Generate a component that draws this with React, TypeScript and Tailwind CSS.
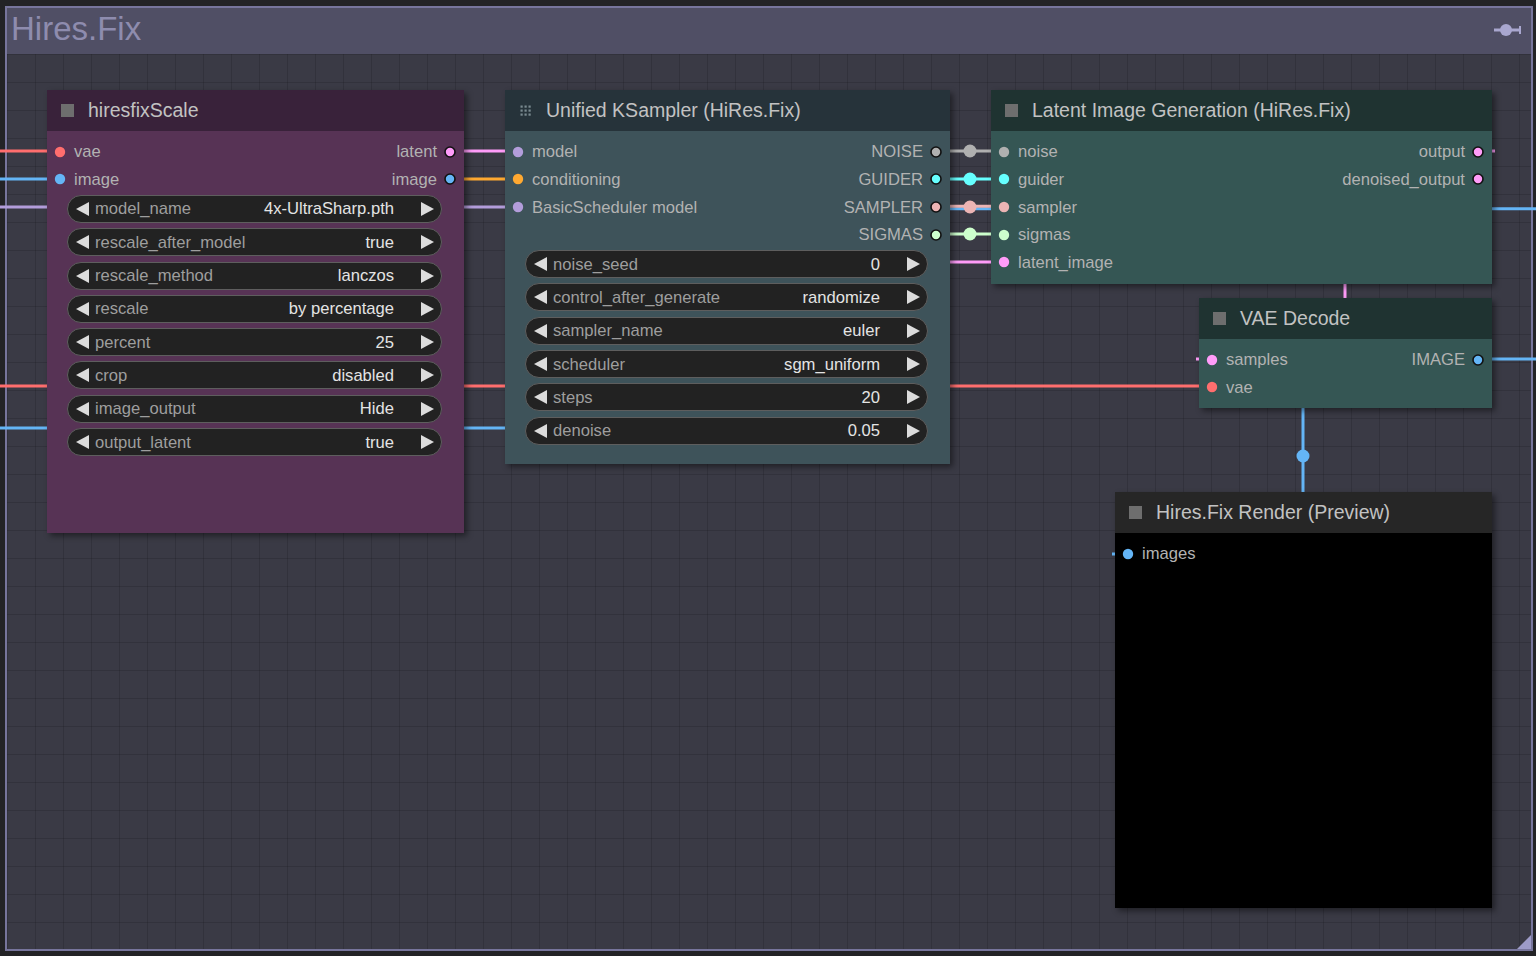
import React from 'react';

type Slot = { label: string; color: string };
type Widget = { label: string; value: string };

const C = {
  red: '#ff6e6e',
  blue: '#64b5f6',
  lav: '#b39ddb',
  pink: '#ff9cf9',
  orange: '#ffa931',
  gray: '#b0b0b0',
  cyan: '#66ffff',
  salmon: '#ecb4b4',
  green: '#cdffcd',
};

function Arrow({ right = false }: { right?: boolean }) {
  return (
    <svg width="13" height="14" viewBox="0 0 13 14" className="shrink-0">
      {right
        ? <polygon points="0,0 13,7 0,14" fill="#dcdcdc" />
        : <polygon points="13,0 0,7 13,14" fill="#dcdcdc" />}
    </svg>
  );
}

function WidgetRow({ label, value }: Widget) {
  return (
    <div className="h-[33.33px] flex items-center pl-[20px] pr-[22px]">
      <div className="flex-1 h-[28px] rounded-full bg-[#222222] border border-[#5e5e5e] flex items-center pl-[8px] pr-[7px]">
        <Arrow />
        <span className="ml-[6px] pt-[2px] text-[#9e9e9e]">{label}</span>
        <span className="ml-auto pt-[2px] text-[#e4e4e4]">{value}</span>
        <span className="ml-[27px] flex"><Arrow right /></span>
      </div>
    </div>
  );
}

function Dot({ color, outlined = false }: { color: string; outlined?: boolean }) {
  return (
    <svg width="12" height="12" viewBox="0 0 12 12" className="shrink-0">
      <circle cx="6" cy="6" r={outlined ? 5 : 5.2} fill={color} stroke={outlined ? '#111' : 'none'} strokeWidth={outlined ? 1.6 : 0} />
    </svg>
  );
}

function SquareIcon() {
  return <span className="w-[13px] h-[13px] bg-[#6e6e6e] shrink-0" />;
}

function DotsIcon() {
  return (
    <svg width="13" height="13" viewBox="0 0 13 13" className="shrink-0">
      {[1.5, 5.5, 9.5].map(y =>
        [1.5, 5.5, 9.5].map(x => <rect key={`${x}-${y}`} x={x} y={y} width="2.2" height="2.2" fill="#7a8a90" />)
      )}
    </svg>
  );
}

function Node({
  className, titleBg, bodyBg, title, icon = 'square', inputs = [], outputs = [], widgets = [],
}: {
  className: string;
  titleBg: string;
  bodyBg: string;
  title: string;
  icon?: 'square' | 'dots';
  inputs?: Slot[];
  outputs?: Slot[];
  widgets?: Widget[];
}) {
  const rows = Math.max(inputs.length, outputs.length);
  return (
    <div className={`absolute flex flex-col shadow-[3px_3px_6px_rgba(0,0,0,0.45)] ${className}`}>
      <div className={`h-[41px] shrink-0 flex items-center pl-[14px] gap-[14px] ${titleBg}`}>
        {icon === 'dots' ? <DotsIcon /> : <SquareIcon />}
        <span className="text-[19.5px] text-[#c2c2c2] leading-none">{title}</span>
      </div>
      <div className={`flex-1 pt-[7px] ${bodyBg}`}>
        {Array.from({ length: rows }).map((_, i) => (
          <div key={i} className="h-[27.6px] flex items-center justify-between">
            {inputs[i] ? (
              <div className="flex items-center pl-[7px] gap-[8px]">
                <Dot color={inputs[i].color} />
                <span className="pt-[2px] text-[#b2b2b2]">{inputs[i].label}</span>
              </div>
            ) : <span />}
            {outputs[i] ? (
              <div className="flex items-center pr-[8px] gap-[7px]">
                <span className="pt-[2px] text-[#b2b2b2]">{outputs[i].label}</span>
                <Dot color={outputs[i].color} outlined />
              </div>
            ) : <span />}
          </div>
        ))}
        <div className="-mt-[1px]">
          {widgets.map(w => <WidgetRow key={w.label} {...w} />)}
        </div>
      </div>
    </div>
  );
}

function Links() {
  const lines: [number, number, number, number, string][] = [
    [0, 151, 60, 151, C.red],
    [0, 179, 60, 179, C.blue],
    [0, 207, 60, 207, C.lav],
    [0, 386, 1212, 386, C.red],
    [0, 428, 518, 428, C.blue],
    [450, 151, 518, 151, C.pink],
    [450, 179, 518, 179, C.orange],
    [450, 207, 518, 207, C.lav],
    [936, 151, 1004, 151, C.gray],
    [936, 179, 1004, 179, C.cyan],
    [936, 208.8, 1536, 208.8, C.blue],
    [936, 206.2, 1004, 206.2, C.salmon],
    [936, 234, 1004, 234, C.green],
    [940, 262, 1004, 262, C.pink],
    [1345, 280, 1345, 300, C.pink],
    [1477, 359, 1536, 359, C.blue],
    [1303, 400, 1303, 496, C.blue],
    [1196, 359, 1212, 359, C.pink],
    [1112, 554, 1129, 554, C.blue],
    [1477, 151, 1495, 151, C.pink],
  ];
  const dots: [number, number, string][] = [
    [970, 151, C.gray],
    [970, 179, C.cyan],
    [970, 207, C.salmon],
    [970, 234, C.green],
    [1303, 456, C.blue],
  ];
  return (
    <svg className="absolute inset-0" width="1536" height="956">
      {lines.map(([x1, y1, x2, y2, c], i) => (
        <line key={i} x1={x1} y1={y1} x2={x2} y2={y2} stroke={c} strokeWidth="3" />
      ))}
      {dots.map(([cx, cy, c], i) => <circle key={i} cx={cx} cy={cy} r="6.5" fill={c} />)}
    </svg>
  );
}

export default function App() {
  return (
    <div className="relative w-[1536px] h-[956px] overflow-hidden bg-[#232326] font-['Liberation_Sans',Arial,sans-serif] text-[16.6px]">
      {/* Group */}
      <div className="absolute left-[5px] top-[6px] w-[1528px] h-[945px] border-2 border-[#77759c] flex flex-col">
        <div className="h-[46px] shrink-0 bg-[#504f65] flex items-center justify-between pl-[4px] pr-[8px] pb-[5px]">
          <span className="text-[33px] text-[#8e8cae] leading-none">Hires.Fix</span>
          <svg width="30" height="14" viewBox="0 0 30 14" className="mt-[3px]">
            <line x1="1" y1="7" x2="27" y2="7" stroke="#a9a7cf" strokeWidth="3" />
            <line x1="27" y1="3" x2="27" y2="11" stroke="#a9a7cf" strokeWidth="2" />
            <circle cx="13" cy="7" r="6" fill="#a9a7cf" />
          </svg>
        </div>
        <div className="relative flex-1 bg-[#3a3a45] bg-[linear-gradient(to_right,rgba(0,0,0,0.13)_1px,transparent_1px),linear-gradient(to_bottom,rgba(0,0,0,0.13)_1px,transparent_1px)] bg-[size:28px_28px]">
          <svg width="14" height="14" viewBox="0 0 14 14" className="absolute right-0 bottom-0">
            <polygon points="14,0 14,14 0,14" fill="#9d9bc8" />
          </svg>
        </div>
      </div>

      <Links />

      <Node
        className="left-[47px] top-[90px] w-[417px] h-[443px]"
        titleBg="bg-[#39223a]"
        bodyBg="bg-[#573355]"
        title="hiresfixScale"
        inputs={[{ label: 'vae', color: C.red }, { label: 'image', color: C.blue }]}
        outputs={[{ label: 'latent', color: C.pink }, { label: 'image', color: C.blue }]}
        widgets={[
          { label: 'model_name', value: '4x-UltraSharp.pth' },
          { label: 'rescale_after_model', value: 'true' },
          { label: 'rescale_method', value: 'lanczos' },
          { label: 'rescale', value: 'by percentage' },
          { label: 'percent', value: '25' },
          { label: 'crop', value: 'disabled' },
          { label: 'image_output', value: 'Hide' },
          { label: 'output_latent', value: 'true' },
        ]}
      />

      <Node
        className="left-[505px] top-[90px] w-[445px] h-[374px]"
        titleBg="bg-[#26333a]"
        bodyBg="bg-[#3e535a]"
        title="Unified KSampler (HiRes.Fix)"
        icon="dots"
        inputs={[
          { label: 'model', color: C.lav },
          { label: 'conditioning', color: C.orange },
          { label: 'BasicScheduler model', color: C.lav },
        ]}
        outputs={[
          { label: 'NOISE', color: C.gray },
          { label: 'GUIDER', color: C.cyan },
          { label: 'SAMPLER', color: C.salmon },
          { label: 'SIGMAS', color: C.green },
        ]}
        widgets={[
          { label: 'noise_seed', value: '0' },
          { label: 'control_after_generate', value: 'randomize' },
          { label: 'sampler_name', value: 'euler' },
          { label: 'scheduler', value: 'sgm_uniform' },
          { label: 'steps', value: '20' },
          { label: 'denoise', value: '0.05' },
        ]}
      />

      <Node
        className="left-[991px] top-[90px] w-[501px] h-[194px]"
        titleBg="bg-[#1f3331]"
        bodyBg="bg-[#355654]"
        title="Latent Image Generation (HiRes.Fix)"
        inputs={[
          { label: 'noise', color: C.gray },
          { label: 'guider', color: C.cyan },
          { label: 'sampler', color: C.salmon },
          { label: 'sigmas', color: C.green },
          { label: 'latent_image', color: C.pink },
        ]}
        outputs={[
          { label: 'output', color: C.pink },
          { label: 'denoised_output', color: C.pink },
        ]}
      />

      <Node
        className="left-[1199px] top-[298px] w-[293px] h-[110px]"
        titleBg="bg-[#1f3331]"
        bodyBg="bg-[#355654]"
        title="VAE Decode"
        inputs={[{ label: 'samples', color: C.pink }, { label: 'vae', color: C.red }]}
        outputs={[{ label: 'IMAGE', color: C.blue }]}
      />

      <Node
        className="left-[1115px] top-[492px] w-[377px] h-[416px]"
        titleBg="bg-[#262626]"
        bodyBg="bg-black"
        title="Hires.Fix Render (Preview)"
        inputs={[{ label: 'images', color: C.blue }]}
      />
    </div>
  );
}
